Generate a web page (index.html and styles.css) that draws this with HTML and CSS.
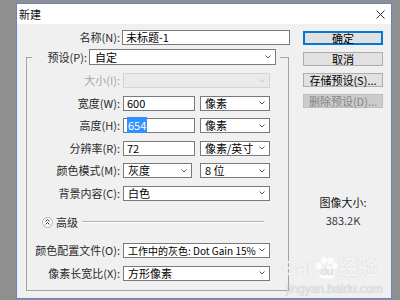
FILE: index.html
```html
<!DOCTYPE html>
<html lang="zh-CN">
  <head>
    <meta charset="UTF-8" />
    <title>新建</title>
    <link rel="stylesheet" href="styles.css">
  </head>
  <body>
    <div class="desk">
      <div class="dialog">
        <div class="titlebar">
          <span>新建</span>
          <svg class="close" width="9" height="9" viewBox="0 0 9 9">
            <path d="M0.5 0.5 L8.5 8.5 M8.5 0.5 L0.5 8.5" stroke="#333" stroke-width="1" fill="none" />
          </svg>
        </div>

        <div class="body">
          <div class="form">
            <div class="row">
              <label class="name-label">名称(N):</label>
              <div class="field w168">未标题-1</div>
            </div>

            <fieldset class="preset">
              <legend>
                <div class="legend-inner">
                  <label class="preset-label">预设(P):</label>
                  <div class="select w187 tall">
                    <span>自定</span>
                    <svg width="6" height="4" viewBox="0 0 6 4"><path d="M0.5 0.5 L3 3 L5.5 0.5" stroke="#555" fill="none" /></svg>
                  </div>
                </div>
              </legend>

              <div class="rows">
                <div class="row">
                  <label class="off">大小(I):</label>
                  <div class="select w147 disabled">
                    <span></span>
                    <svg width="6" height="4" viewBox="0 0 6 4"><path d="M0.5 0.5 L3 3 L5.5 0.5" stroke="#c4c4c4" fill="none" /></svg>
                  </div>
                </div>
                <div class="row">
                  <label>宽度(W):</label>
                  <div class="field w72">600</div>
                  <div class="select w70 gap5">
                    <span>像素</span>
                    <svg width="6" height="4" viewBox="0 0 6 4"><path d="M0.5 0.5 L3 3 L5.5 0.5" stroke="#555" fill="none" /></svg>
                  </div>
                </div>
                <div class="row">
                  <label>高度(H):</label>
                  <div class="field w72"><span class="picked">654</span></div>
                  <div class="select w70 gap5">
                    <span>像素</span>
                    <svg width="6" height="4" viewBox="0 0 6 4"><path d="M0.5 0.5 L3 3 L5.5 0.5" stroke="#555" fill="none" /></svg>
                  </div>
                </div>
                <div class="row">
                  <label>分辨率(R):</label>
                  <div class="field w72">72</div>
                  <div class="select w70 gap5">
                    <span>像素/英寸</span>
                    <svg width="6" height="4" viewBox="0 0 6 4"><path d="M0.5 0.5 L3 3 L5.5 0.5" stroke="#555" fill="none" /></svg>
                  </div>
                </div>
                <div class="row">
                  <label>颜色模式(M):</label>
                  <div class="select w69">
                    <span>灰度</span>
                    <svg width="6" height="4" viewBox="0 0 6 4"><path d="M0.5 0.5 L3 3 L5.5 0.5" stroke="#555" fill="none" /></svg>
                  </div>
                  <div class="select w70 gap8">
                    <span>8 位</span>
                    <svg width="6" height="4" viewBox="0 0 6 4"><path d="M0.5 0.5 L3 3 L5.5 0.5" stroke="#555" fill="none" /></svg>
                  </div>
                </div>
                <div class="row">
                  <label>背景内容(C):</label>
                  <div class="select w147">
                    <span>白色</span>
                    <svg width="6" height="4" viewBox="0 0 6 4"><path d="M0.5 0.5 L3 3 L5.5 0.5" stroke="#555" fill="none" /></svg>
                  </div>
                </div>
              </div>

              <div class="advanced">
                <div class="toggle">
                  <svg width="5" height="6" viewBox="0 0 5 6"><path d="M0.5 2.5 L2.5 0.5 L4.5 2.5 M0.5 5.5 L2.5 3.5 L4.5 5.5" stroke="#333" fill="none" /></svg>
                </div>
                <span class="adv-text">高级</span>
                <div class="adv-line"></div>
              </div>

              <div class="rows lower">
                <div class="row">
                  <label>颜色配置文件(O):</label>
                  <div class="select w147">
                    <span class="compact">工作中的灰色: Dot Gain 15%</span>
                    <svg width="6" height="4" viewBox="0 0 6 4"><path d="M0.5 0.5 L3 3 L5.5 0.5" stroke="#555" fill="none" /></svg>
                  </div>
                </div>
                <div class="row">
                  <label>像素长宽比(X):</label>
                  <div class="select w147">
                    <span>方形像素</span>
                    <svg width="6" height="4" viewBox="0 0 6 4"><path d="M0.5 0.5 L3 3 L5.5 0.5" stroke="#555" fill="none" /></svg>
                  </div>
                </div>
              </div>
            </fieldset>
          </div>

          <div class="side">
            <div class="btn default">确定</div>
            <div class="btn">取消</div>
            <div class="btn">存储预设(S)...</div>
            <div class="btn disabled">删除预设(D)...</div>
            <div class="size-info">
              <div>图像大小:</div>
              <div class="size-value">383.2K</div>
            </div>
          </div>
        </div>

        <div class="watermark">
          <div class="brand">
            <span>Bai</span>
            <svg class="paw" width="26" height="22" viewBox="0 0 26 22">
              <ellipse cx="5" cy="9" rx="3" ry="3.5" />
              <ellipse cx="10" cy="3.5" rx="3" ry="3.5" />
              <ellipse cx="16.5" cy="3.5" rx="3" ry="3.5" />
              <ellipse cx="21.5" cy="9" rx="3" ry="3.5" />
              <path d="M13 9 C7 9 4 17 6 20 C8 22 18 22 20 20 C22 17 19 9 13 9 Z" />
            </svg>
            <span class="paw-text">du</span>
            <span>经验</span>
          </div>
          <div class="site">jingyan.baidu.com</div>
        </div>
      </div>
    </div>
  </body>
</html>
```

FILE: styles.css
```css
* {
  box-sizing: border-box;
}

body {
  margin: 0;
  width: 400px;
  height: 300px;
  overflow: hidden;
  background: #8f8f8f;
  font-family: "Noto Sans CJK SC", sans-serif;
  font-size: 11px;
  color: #2a2a2a;
}

.desk {
  padding: 3px 0 0 16px;
}

.dialog {
  position: relative;
  width: 376px;
  height: 296px;
  background: #f0f0f0;
  border: 1px solid #6a82c8;
}

.titlebar {
  height: 20px;
  line-height: 20px;
  background: #fff;
  display: flex;
  align-items: center;
  justify-content: space-between;
  padding: 0 6px 0 2px;
  color: #111;
}

.body {
  display: flex;
  padding-top: 6px;
}

.form {
  width: 273px;
}

.row {
  display: flex;
  align-items: center;
  height: 15px;
  line-height: 15px;
}

.name-label {
  width: 103px;
  margin-right: 2px;
  text-align: right;
}

.field {
  height: 15px;
  background: #fff;
  border: 1px solid #7a7a7a;
  padding-left: 3px;
  line-height: 13px;
  color: #000;
  white-space: nowrap;
}

.picked {
  background: #3390ff;
  color: #fff;
  padding: 0 1px;
}

.select {
  height: 15px;
  background: #fff;
  border: 1px solid #7a7a7a;
  display: flex;
  align-items: center;
  justify-content: space-between;
  padding: 0 4px 0 4px;
  line-height: 13px;
  color: #000;
  white-space: nowrap;
}

.select svg {
  flex-shrink: 0;
  margin-left: 2px;
}

.select .compact {
  font-size: 10px;
}

.select.tall {
  height: 16px;
  padding-left: 5px;
}

.select.disabled {
  background: #eaeaea;
  border-color: #d4d4d4;
}

.w168 { width: 168px; }
.w187 { width: 187px; }
.w147 { width: 147px; }
.w72 { width: 72px; }
.w70 { width: 70px; }
.w69 { width: 69px; }
.gap5 { margin-left: 5px; }
.gap8 { margin-left: 8px; }

.preset {
  margin: 4px 0 0 9px;
  width: 263px;
  min-width: 0;
  border: 1px solid #a3a3a3;
  padding: 0 0 9px 0;
}

.preset legend {
  margin-left: 5px;
  padding: 0 4px 0 2px;
}

.legend-inner {
  display: flex;
  align-items: center;
  line-height: 16px;
}

.preset-label {
  width: 53px;
  margin-right: 2px;
  text-align: right;
  white-space: nowrap;
}

.rows {
  display: flex;
  flex-direction: column;
  gap: 7.6px;
  margin-top: 8px;
}

.rows.lower {
  margin-top: 15px;
}

.rows label {
  width: 93px;
  margin-right: 3px;
  text-align: right;
  white-space: nowrap;
}

.rows label.off {
  color: #a6a6a6;
}

.advanced {
  display: flex;
  align-items: center;
  height: 11px;
  margin-top: 16px;
  padding: 0 24px 0 15px;
}

.toggle {
  width: 11px;
  height: 11px;
  border-radius: 50%;
  border: 1px solid #b4b4b4;
  background: #fbfbfb;
  display: flex;
  align-items: center;
  justify-content: center;
}

.adv-text {
  margin: 0 4px 0 3px;
  line-height: 13px;
}

.adv-line {
  flex: 1;
  height: 2px;
  border-top: 1px solid #b0b0b0;
  border-bottom: 1px solid #fff;
}

.side {
  width: 80px;
  margin-left: 13px;
  padding-top: 1px;
  display: flex;
  flex-direction: column;
}

.btn {
  height: 14px;
  line-height: 12px;
  margin-bottom: 7px;
  text-align: center;
  background: #e1e1e1;
  border: 1px solid #adadad;
  color: #000;
}

.btn.default {
  border-color: #0078d7;
  box-shadow: inset 0 0 0 1px #0078d7;
}

.btn.disabled {
  background: #cccccc;
  border-color: #bfbfbf;
  color: #858585;
}

.size-info {
  margin-top: 80px;
  text-align: center;
  line-height: 14px;
  color: #111;
}

.size-value {
  margin-top: 4px;
  color: #333a44;
}

.watermark {
  position: absolute;
  left: 265px;
  top: 250px;
  color: rgba(255, 255, 255, 0.8);
  text-shadow: 0 0 1px rgba(160, 160, 160, 0.5);
}

.brand {
  display: flex;
  align-items: center;
  font-family: "Liberation Sans", "Noto Sans CJK SC", sans-serif;
  font-size: 20px;
  font-weight: bold;
  line-height: 22px;
}

.paw {
  fill: rgba(255, 255, 255, 0.8);
  margin-left: 1px;
}

.paw-text {
  font-size: 11px;
  margin-left: -20px;
  margin-right: 4px;
  color: #e4e4e4;
  padding-top: 6px;
}

.site {
  font-family: "Liberation Sans", sans-serif;
  font-size: 12px;
  line-height: 14px;
  margin-left: 4px;
  color: rgba(225, 225, 225, 0.9);
}
```
